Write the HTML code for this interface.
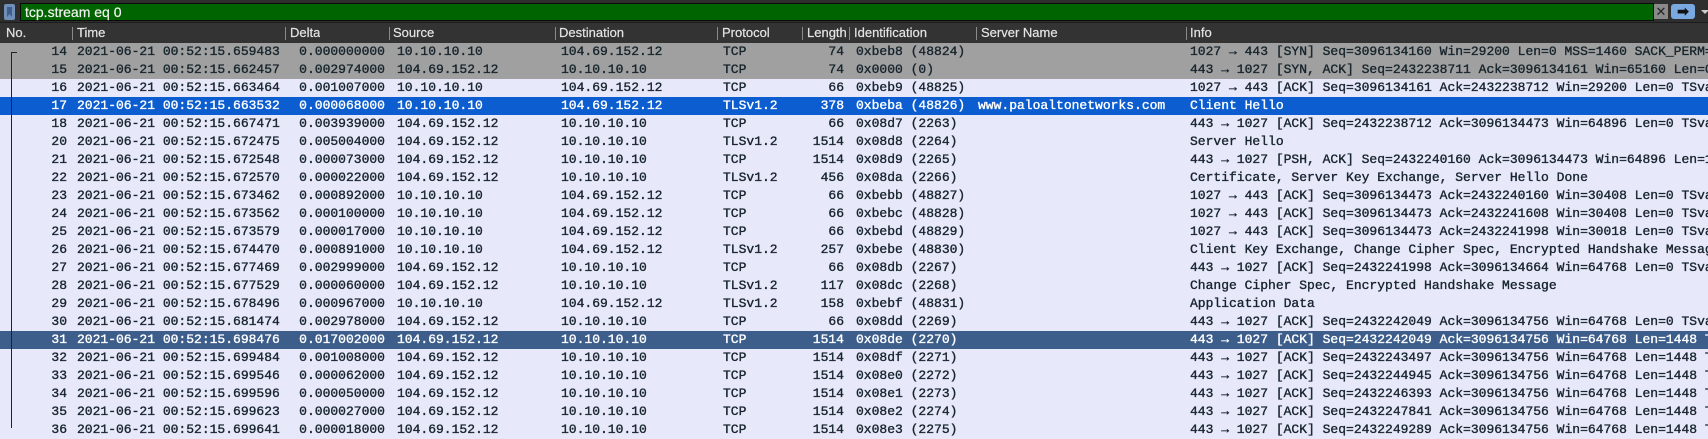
<!DOCTYPE html>
<html><head><meta charset="utf-8"><style>
*{margin:0;padding:0;box-sizing:border-box}
body{width:1708px;height:428px;overflow:hidden;background:#e8e8fb;position:relative;font-family:"Liberation Mono",monospace}
#fb{position:absolute;left:0;top:0;width:1708px;height:23px;background:#2e2e2e;border-bottom:1px solid #1c1c1c}
#bm{position:absolute;left:4px;top:4px;width:11px;height:16px;background:#6f8fb8;border-radius:2px}
#bm:after{content:"";position:absolute;left:3px;top:3px;width:5px;height:10px;background:#3e5f8a;clip-path:polygon(0 0,100% 0,100% 100%,50% 70%,0 100%)}
#gf{position:absolute;left:20px;top:3px;width:1634px;height:18px;background:#006400;border:1px solid #0a0a0a;color:#f2f2f2;font:14px "Liberation Sans",sans-serif;line-height:16px;padding-left:4px;-webkit-text-stroke:0.2px #f2f2f2}
#xb{position:absolute;left:1654px;top:4px;width:14px;height:15px;background:#8a8a8a;color:#222;font:13px "Liberation Sans",sans-serif;line-height:15px;text-align:center}
#ab{position:absolute;left:1671px;top:4px;width:24px;height:15px;background:#7aa8e0;border-radius:3px;color:#111;font:bold 14px "Liberation Sans",sans-serif;line-height:14px;text-align:center}
#dd{position:absolute;left:1701px;top:10px;width:0;height:0;border-left:4px solid transparent;border-right:4px solid transparent;border-top:4px solid #ccc}
#hd{position:absolute;left:0;top:23px;width:1708px;height:20px;background:#333;color:#e4e4e4;font:13px "Liberation Sans",sans-serif;line-height:20px;-webkit-text-stroke:0.2px #e4e4e4}
#hd span{position:absolute;top:0;white-space:nowrap;overflow:hidden}
.sep{position:absolute;top:4px;width:1px;height:13px;background:#8a8a8a}
.r{position:absolute;left:0;width:1708px;height:18px;font-size:13px;line-height:18px;color:#16242c;white-space:nowrap;-webkit-text-stroke:0.35px currentColor}
.r span{position:absolute;top:0}
.g{background:#a0a0a0}
.s{background:#0c5dcf;color:#fff}
.t{background:#3d5e8b;color:#fff}
.c0{right:1641px;text-align:right}
.c1{left:77px}.c2{right:1323px}.c3{left:397px}.c4{left:561px}.c5{left:723px}.c6{right:864px}.c7{left:856px}.c8{left:978px}.c9{left:1190px}
#tl{position:absolute;left:11px;top:52px;width:1px;height:376px;background:#222}
#tk{position:absolute;left:11px;top:52px;width:6px;height:1px;background:#222}
</style></head><body>
<div id="fb"><div id="bm"></div><div id="gf">tcp.stream eq 0</div><div id="xb">✕</div><div id="ab">➡</div><div id="dd"></div></div>
<div id="hd">
<span style="left:6px">No.</span><div class="sep" style="left:72px"></div>
<span style="left:77px">Time</span><div class="sep" style="left:285px"></div>
<span style="left:290px">Delta</span><div class="sep" style="left:389px"></div>
<span style="left:393px">Source</span><div class="sep" style="left:555px"></div>
<span style="left:559px">Destination</span><div class="sep" style="left:717px"></div>
<span style="left:722px">Protocol</span><div class="sep" style="left:802px"></div>
<span style="left:807px;width:40px">Length</span><div class="sep" style="left:849px"></div>
<span style="left:854px">Identification</span><div class="sep" style="left:976px"></div>
<span style="left:981px">Server Name</span><div class="sep" style="left:1186px"></div>
<span style="left:1190px">Info</span>
</div>
<div class="r g" style="top:43px"><span class="c0">14</span><span class="c1">2021-06-21 00:52:15.659483</span><span class="c2">0.000000000</span><span class="c3">10.10.10.10</span><span class="c4">104.69.152.12</span><span class="c5">TCP</span><span class="c6">74</span><span class="c7">0xbeb8 (48824)</span><span class="c9">1027 → 443 [SYN] Seq=3096134160 Win=29200 Len=0 MSS=1460 SACK_PERM=1</span></div>
<div class="r g" style="top:61px"><span class="c0">15</span><span class="c1">2021-06-21 00:52:15.662457</span><span class="c2">0.002974000</span><span class="c3">104.69.152.12</span><span class="c4">10.10.10.10</span><span class="c5">TCP</span><span class="c6">74</span><span class="c7">0x0000 (0)</span><span class="c9">443 → 1027 [SYN, ACK] Seq=2432238711 Ack=3096134161 Win=65160 Len=0</span></div>
<div class="r" style="top:79px"><span class="c0">16</span><span class="c1">2021-06-21 00:52:15.663464</span><span class="c2">0.001007000</span><span class="c3">10.10.10.10</span><span class="c4">104.69.152.12</span><span class="c5">TCP</span><span class="c6">66</span><span class="c7">0xbeb9 (48825)</span><span class="c9">1027 → 443 [ACK] Seq=3096134161 Ack=2432238712 Win=29200 Len=0 TSval</span></div>
<div class="r s" style="top:97px"><span class="c0">17</span><span class="c1">2021-06-21 00:52:15.663532</span><span class="c2">0.000068000</span><span class="c3">10.10.10.10</span><span class="c4">104.69.152.12</span><span class="c5">TLSv1.2</span><span class="c6">378</span><span class="c7">0xbeba (48826)</span><span class="c8">www.paloaltonetworks.com</span><span class="c9">Client Hello</span></div>
<div class="r" style="top:115px"><span class="c0">18</span><span class="c1">2021-06-21 00:52:15.667471</span><span class="c2">0.003939000</span><span class="c3">104.69.152.12</span><span class="c4">10.10.10.10</span><span class="c5">TCP</span><span class="c6">66</span><span class="c7">0x08d7 (2263)</span><span class="c9">443 → 1027 [ACK] Seq=2432238712 Ack=3096134473 Win=64896 Len=0 TSval</span></div>
<div class="r" style="top:133px"><span class="c0">20</span><span class="c1">2021-06-21 00:52:15.672475</span><span class="c2">0.005004000</span><span class="c3">104.69.152.12</span><span class="c4">10.10.10.10</span><span class="c5">TLSv1.2</span><span class="c6">1514</span><span class="c7">0x08d8 (2264)</span><span class="c9">Server Hello</span></div>
<div class="r" style="top:151px"><span class="c0">21</span><span class="c1">2021-06-21 00:52:15.672548</span><span class="c2">0.000073000</span><span class="c3">104.69.152.12</span><span class="c4">10.10.10.10</span><span class="c5">TCP</span><span class="c6">1514</span><span class="c7">0x08d9 (2265)</span><span class="c9">443 → 1027 [PSH, ACK] Seq=2432240160 Ack=3096134473 Win=64896 Len=1448</span></div>
<div class="r" style="top:169px"><span class="c0">22</span><span class="c1">2021-06-21 00:52:15.672570</span><span class="c2">0.000022000</span><span class="c3">104.69.152.12</span><span class="c4">10.10.10.10</span><span class="c5">TLSv1.2</span><span class="c6">456</span><span class="c7">0x08da (2266)</span><span class="c9">Certificate, Server Key Exchange, Server Hello Done</span></div>
<div class="r" style="top:187px"><span class="c0">23</span><span class="c1">2021-06-21 00:52:15.673462</span><span class="c2">0.000892000</span><span class="c3">10.10.10.10</span><span class="c4">104.69.152.12</span><span class="c5">TCP</span><span class="c6">66</span><span class="c7">0xbebb (48827)</span><span class="c9">1027 → 443 [ACK] Seq=3096134473 Ack=2432240160 Win=30408 Len=0 TSval</span></div>
<div class="r" style="top:205px"><span class="c0">24</span><span class="c1">2021-06-21 00:52:15.673562</span><span class="c2">0.000100000</span><span class="c3">10.10.10.10</span><span class="c4">104.69.152.12</span><span class="c5">TCP</span><span class="c6">66</span><span class="c7">0xbebc (48828)</span><span class="c9">1027 → 443 [ACK] Seq=3096134473 Ack=2432241608 Win=30408 Len=0 TSval</span></div>
<div class="r" style="top:223px"><span class="c0">25</span><span class="c1">2021-06-21 00:52:15.673579</span><span class="c2">0.000017000</span><span class="c3">10.10.10.10</span><span class="c4">104.69.152.12</span><span class="c5">TCP</span><span class="c6">66</span><span class="c7">0xbebd (48829)</span><span class="c9">1027 → 443 [ACK] Seq=3096134473 Ack=2432241998 Win=30018 Len=0 TSval</span></div>
<div class="r" style="top:241px"><span class="c0">26</span><span class="c1">2021-06-21 00:52:15.674470</span><span class="c2">0.000891000</span><span class="c3">10.10.10.10</span><span class="c4">104.69.152.12</span><span class="c5">TLSv1.2</span><span class="c6">257</span><span class="c7">0xbebe (48830)</span><span class="c9">Client Key Exchange, Change Cipher Spec, Encrypted Handshake Message</span></div>
<div class="r" style="top:259px"><span class="c0">27</span><span class="c1">2021-06-21 00:52:15.677469</span><span class="c2">0.002999000</span><span class="c3">104.69.152.12</span><span class="c4">10.10.10.10</span><span class="c5">TCP</span><span class="c6">66</span><span class="c7">0x08db (2267)</span><span class="c9">443 → 1027 [ACK] Seq=2432241998 Ack=3096134664 Win=64768 Len=0 TSval</span></div>
<div class="r" style="top:277px"><span class="c0">28</span><span class="c1">2021-06-21 00:52:15.677529</span><span class="c2">0.000060000</span><span class="c3">104.69.152.12</span><span class="c4">10.10.10.10</span><span class="c5">TLSv1.2</span><span class="c6">117</span><span class="c7">0x08dc (2268)</span><span class="c9">Change Cipher Spec, Encrypted Handshake Message</span></div>
<div class="r" style="top:295px"><span class="c0">29</span><span class="c1">2021-06-21 00:52:15.678496</span><span class="c2">0.000967000</span><span class="c3">10.10.10.10</span><span class="c4">104.69.152.12</span><span class="c5">TLSv1.2</span><span class="c6">158</span><span class="c7">0xbebf (48831)</span><span class="c9">Application Data</span></div>
<div class="r" style="top:313px"><span class="c0">30</span><span class="c1">2021-06-21 00:52:15.681474</span><span class="c2">0.002978000</span><span class="c3">104.69.152.12</span><span class="c4">10.10.10.10</span><span class="c5">TCP</span><span class="c6">66</span><span class="c7">0x08dd (2269)</span><span class="c9">443 → 1027 [ACK] Seq=2432242049 Ack=3096134756 Win=64768 Len=0 TSval</span></div>
<div class="r t" style="top:331px"><span class="c0">31</span><span class="c1">2021-06-21 00:52:15.698476</span><span class="c2">0.017002000</span><span class="c3">104.69.152.12</span><span class="c4">10.10.10.10</span><span class="c5">TCP</span><span class="c6">1514</span><span class="c7">0x08de (2270)</span><span class="c9">443 → 1027 [ACK] Seq=2432242049 Ack=3096134756 Win=64768 Len=1448 T</span></div>
<div class="r" style="top:349px"><span class="c0">32</span><span class="c1">2021-06-21 00:52:15.699484</span><span class="c2">0.001008000</span><span class="c3">104.69.152.12</span><span class="c4">10.10.10.10</span><span class="c5">TCP</span><span class="c6">1514</span><span class="c7">0x08df (2271)</span><span class="c9">443 → 1027 [ACK] Seq=2432243497 Ack=3096134756 Win=64768 Len=1448 T</span></div>
<div class="r" style="top:367px"><span class="c0">33</span><span class="c1">2021-06-21 00:52:15.699546</span><span class="c2">0.000062000</span><span class="c3">104.69.152.12</span><span class="c4">10.10.10.10</span><span class="c5">TCP</span><span class="c6">1514</span><span class="c7">0x08e0 (2272)</span><span class="c9">443 → 1027 [ACK] Seq=2432244945 Ack=3096134756 Win=64768 Len=1448 T</span></div>
<div class="r" style="top:385px"><span class="c0">34</span><span class="c1">2021-06-21 00:52:15.699596</span><span class="c2">0.000050000</span><span class="c3">104.69.152.12</span><span class="c4">10.10.10.10</span><span class="c5">TCP</span><span class="c6">1514</span><span class="c7">0x08e1 (2273)</span><span class="c9">443 → 1027 [ACK] Seq=2432246393 Ack=3096134756 Win=64768 Len=1448 T</span></div>
<div class="r" style="top:403px"><span class="c0">35</span><span class="c1">2021-06-21 00:52:15.699623</span><span class="c2">0.000027000</span><span class="c3">104.69.152.12</span><span class="c4">10.10.10.10</span><span class="c5">TCP</span><span class="c6">1514</span><span class="c7">0x08e2 (2274)</span><span class="c9">443 → 1027 [ACK] Seq=2432247841 Ack=3096134756 Win=64768 Len=1448 T</span></div>
<div class="r" style="top:421px"><span class="c0">36</span><span class="c1">2021-06-21 00:52:15.699641</span><span class="c2">0.000018000</span><span class="c3">104.69.152.12</span><span class="c4">10.10.10.10</span><span class="c5">TCP</span><span class="c6">1514</span><span class="c7">0x08e3 (2275)</span><span class="c9">443 → 1027 [ACK] Seq=2432249289 Ack=3096134756 Win=64768 Len=1448 T</span></div>
<div id="tl"></div><div id="tk"></div>
</body></html>
